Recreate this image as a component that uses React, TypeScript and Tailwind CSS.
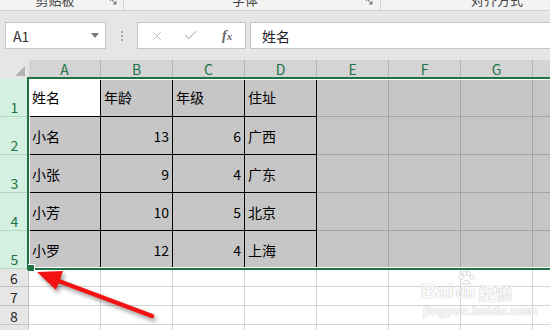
import { X, Check } from 'lucide-react';

const data = [
  ['姓名', '年龄', '年级', '住址'],
  ['小名', '13', '6', '广西'],
  ['小张', '9', '4', '广东'],
  ['小芳', '10', '5', '北京'],
  ['小罗', '12', '4', '上海'],
];

const cols = ['A', 'B', 'C', 'D', 'E', 'F', 'G', 'H'];
const rows = [1, 2, 3, 4, 5, 6, 7, 8, 9];

function Launcher() {
  return (
    <svg width="8" height="8" viewBox="0 0 8 8" className="text-[#666]">
      <path d="M0.5 3 V0.5 H3" fill="none" stroke="currentColor" strokeWidth="1" />
      <path d="M2 2 L6 6 M6 3 V6 H3" fill="none" stroke="currentColor" strokeWidth="1" />
    </svg>
  );
}

function RibbonGroup({ label, labelWidth, groupWidth }: { label: string; labelWidth: string; groupWidth: string }) {
  return (
    <div className={`flex shrink-0 ${groupWidth} border-r border-[#d2d2d2]`}>
      <div className={`${labelWidth} text-center text-[13px] leading-[13px] -mt-[7px] text-[#444]`}>{label}</div>
      <div className="-mt-[2px]">
        <Launcher />
      </div>
    </div>
  );
}

function cellClass(r: number, c: number) {
  if (r <= 5 && c < 4) {
    return r === 1 && c === 0
      ? 'bg-white border-r border-b border-black'
      : 'bg-[#c6c6c6] border-r border-b border-black';
  }
  if (r <= 5) return 'bg-[#c6c6c6] border-r border-b border-[#a5a5a5]';
  return 'bg-white border-r border-b border-[#d4d4d4]';
}

export default function App() {
  return (
    <div className="relative w-[550px] h-[330px] overflow-hidden bg-[#e6e6e6] font-['Noto_Sans_CJK_SC',sans-serif] text-[#222]">
      {/* ribbon group labels, cut off at the top */}
      <div className="flex h-[11px] overflow-hidden bg-[#f3f3f3] border-b border-[#d2d2d2]">
        <RibbonGroup label="剪贴板" labelWidth="w-[110px]" groupWidth="w-[124px]" />
        <RibbonGroup label="字体" labelWidth="w-[242px]" groupWidth="w-[257px]" />
        <div className="w-[232px] shrink-0 text-center text-[13px] leading-[13px] -mt-[7px] text-[#444]">对齐方式</div>
      </div>

      {/* formula bar */}
      <div className="flex items-center h-[27px] mt-[11px]">
        <div className="ml-[5px] w-[101px] h-full bg-white border border-[#c6c6c6] flex items-center justify-between pl-[7px] pr-[6px]">
          <span className="text-[14px] leading-none text-[#333]">A1</span>
          <svg width="8" height="5" viewBox="0 0 8 5">
            <path d="M0 0 H8 L4 5 Z" fill="#777" />
          </svg>
        </div>
        <div className="ml-[15px] flex flex-col gap-[2px]">
          <div className="w-[2px] h-[2px] bg-[#a8a8a8]" />
          <div className="w-[2px] h-[2px] bg-[#a8a8a8]" />
          <div className="w-[2px] h-[2px] bg-[#a8a8a8]" />
        </div>
        <div className="ml-[14px] w-[109px] h-full bg-white border border-[#c6c6c6] flex items-center">
          <X size={14} strokeWidth={1.4} className="ml-[12px] text-[#bdbdbd]" />
          <Check size={15} strokeWidth={1.8} className="ml-[19px] text-[#bdbdbd]" />
          <span className="ml-[24px] font-['Liberation_Serif',serif] italic font-bold text-[14px] leading-none text-[#666]">
            f<span className="text-[11px]">x</span>
          </span>
        </div>
        <div className="ml-[4px] flex-1 h-full bg-white border border-r-0 border-[#c6c6c6] flex items-center pl-[11px]">
          <span className="text-[14px] leading-none text-[#222]">姓名</span>
        </div>
      </div>

      {/* sheet */}
      <div className="relative mt-[11px] h-[270px]">
        <div className="grid w-[605px] grid-cols-[29px_72px_72px_72px_72px_72px_72px_72px_72px] grid-rows-[18px_39px_38px_38px_38px_38px_18px_19px_19px_19px]">
          <div className="relative bg-[#e6e6e6]">
            <svg width="29" height="18" viewBox="0 0 29 18" className="absolute inset-0">
              <path d="M15 16 L25 6 V16 Z" fill="#b4b4b4" />
            </svg>
          </div>
          {cols.map((c) => (
            <div
              key={c}
              className="bg-[#d4d4d4] border-r border-[#b4b4b4] flex items-center justify-center text-[14px] leading-none text-[#217346]"
            >
              {c}
            </div>
          ))}

          {rows.map((r) => (
            <div key={r} className="contents">
              <div
                className={
                  r <= 5
                    ? 'bg-[#d3f0e0] border-b border-[#b3d9c3] flex items-end justify-center pb-[2px] text-[14px] leading-[14px] text-[#217346]'
                    : 'bg-[#e6e6e6] border-b border-r border-[#c4c4c4] flex items-end justify-center pb-[1px] text-[14px] leading-[14px] text-[#262626]'
                }
              >
                {r}
              </div>
              {cols.map((c, ci) => {
                const v = r <= 5 && ci < 4 ? data[r - 1][ci] : '';
                const num = /^\d+$/.test(v);
                return (
                  <div
                    key={c}
                    className={`${cellClass(r, ci)} flex items-center px-[3px] text-[14px] leading-none text-black ${
                      num ? 'justify-end' : 'justify-start'
                    }`}
                  >
                    {v}
                  </div>
                );
              })}
            </div>
          ))}
        </div>

        {/* selection border */}
        <div className="absolute left-[27px] top-[17px] h-[193px] right-[-4px] border-2 border-[#217346]">
          <div className="absolute inset-0 border border-white" />
        </div>
        <div className="absolute left-[28px] top-[204px] w-[7px] h-[7px] bg-[#217346] border-t border-r border-white" />
      </div>

      {/* watermark */}
      <div className="absolute left-[421px] top-[280px] flex items-end text-white/90 [text-shadow:0_0_1px_#c4c4c4,0_0_1px_#c4c4c4]">
        <span className="font-['Liberation_Sans',sans-serif] font-bold text-[21px] leading-none">Bai</span>
        <span className="relative ml-[2px] font-['Liberation_Sans',sans-serif] font-bold text-[16px] leading-none">
          du
          <svg width="18" height="16" viewBox="0 0 18 16" className="absolute left-[1px] -top-[15px]">
            <g fill="white" stroke="#d0d0d0" strokeWidth="0.8">
              <ellipse cx="4" cy="7" rx="2" ry="2.5" />
              <ellipse cx="7.5" cy="3.5" rx="2" ry="2.5" />
              <ellipse cx="11.5" cy="3.5" rx="2" ry="2.5" />
              <ellipse cx="15" cy="7" rx="2" ry="2.5" />
              <path d="M5 14 Q9.5 7 14 14 Z" />
            </g>
          </svg>
        </span>
        <span className="ml-[3px] font-bold text-[17px] leading-none">经验</span>
      </div>
      <div className="absolute left-[423px] top-[304px] font-['Liberation_Sans',sans-serif] font-bold text-[13px] leading-none text-white/90 [text-shadow:0_0_1px_#c4c4c4,0_0_1px_#c4c4c4]">
        jingyan.baidu.com
      </div>

      {/* red annotation arrow */}
      <svg
        width="550"
        height="330"
        viewBox="0 0 550 330"
        className="absolute inset-0 pointer-events-none drop-shadow-[2px_3px_2px_rgba(0,0,0,0.4)]"
      >
        <line x1="152" y1="316" x2="56" y2="280" stroke="#f21212" strokeWidth="4.5" strokeLinecap="round" />
        <path d="M37 272 L63 271 L56 290 Z" fill="#f21212" />
      </svg>
    </div>
  );
}
